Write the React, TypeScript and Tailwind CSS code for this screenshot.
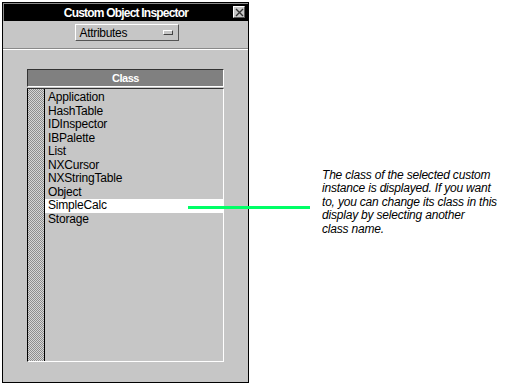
const classes = [
  'Application',
  'HashTable',
  'IDInspector',
  'IBPalette',
  'List',
  'NXCursor',
  'NXStringTable',
  'Object',
  'SimpleCalc',
  'Storage',
];

function CloseBox() {
  return (
    <div className="absolute right-[3px] top-[2px] w-[12px] h-[12px] bg-[#c6c6c6] border-t border-l border-t-white border-l-white border-b border-r border-b-[#555] border-r-[#555] flex items-center justify-center">
      <svg width="9" height="9" viewBox="0 0 9 9">
        <path d="M1 1 L8 8 M8 1 L1 8" stroke="#333" strokeWidth="1.4" />
      </svg>
    </div>
  );
}

export default function App() {
  return (
    <div
      className="relative w-[506px] h-[386px] bg-white flex overflow-hidden"
      style={{ fontFamily: '"Liberation Sans", Arial, sans-serif' }}
    >
      <div className="ml-[2px] mt-[2px] w-[247px] h-[381px] border border-black bg-[#c6c6c6] flex flex-col">
        <div className="relative h-[18px] bg-black border-t border-l border-[#8c8c8c] flex items-center justify-center">
          <span className="text-white font-bold text-[12px] tracking-[-0.8px] leading-none">
            Custom Object Inspector
          </span>
          <CloseBox />
        </div>

        <div className="mt-[3px] flex justify-center">
          <div className="ml-[2px] w-[104px] h-[17px] border border-t-white border-l-white border-b-[#555] border-r-[#555] bg-[#c6c6c6] flex items-center justify-between pl-[4px] pr-[5px]">
            <span className="text-[12px] leading-none text-black tracking-[-0.3px]">Attributes</span>
            <div className="w-[10px] h-[5px] bg-[#c6c6c6] border-t border-l border-t-white border-l-white border-b border-r border-b-[#444] border-r-[#444]" />
          </div>
        </div>

        <div className="mt-[7px] h-[1px] bg-[#8a8a8a]" />
        <div className="h-[1px] bg-white" />

        <div className="mx-[24px] mt-[19px] flex flex-col">
          <div className="h-[18px] bg-[#808080] border-t border-l border-t-[#333] border-l-[#333] border-b border-r border-b-white border-r-white flex items-center justify-center">
            <span className="text-white font-bold text-[11px] tracking-[-0.5px] leading-none">Class</span>
          </div>
          <div className="mt-[1px] h-[274px] flex border-t border-l border-t-[#333] border-l-black border-b border-r border-b-white border-r-white">
            <div className="w-[16px] bg-[repeating-conic-gradient(#8e8e8e_0_25%,#d6d6d6_0_50%)] bg-size-[2px_2px]" />
            <div className="w-[1px] bg-black" />
            <div className="flex-1 pt-[2px] flex flex-col">
              {classes.map((name) => (
                <div
                  key={name}
                  className={`h-[13.5px] pl-[3px] text-[12px] leading-[13.5px] text-black tracking-[-0.2px] ${
                    name === 'SimpleCalc' ? 'bg-white' : ''
                  }`}
                >
                  {name}
                </div>
              ))}
            </div>
          </div>
        </div>
      </div>

      <div className="ml-[73px] mt-[169px] text-[12px] italic leading-[13.4px] text-black tracking-[-0.2px]">
        The class of the selected custom
        <br />
        instance is displayed. If you want
        <br />
        to, you can change its class in this
        <br />
        display by selecting another
        <br />
        class name.
      </div>

      <div className="absolute left-[188px] top-[206px] w-[122px] h-[3px] bg-[#00ff66]" />
    </div>
  );
}
